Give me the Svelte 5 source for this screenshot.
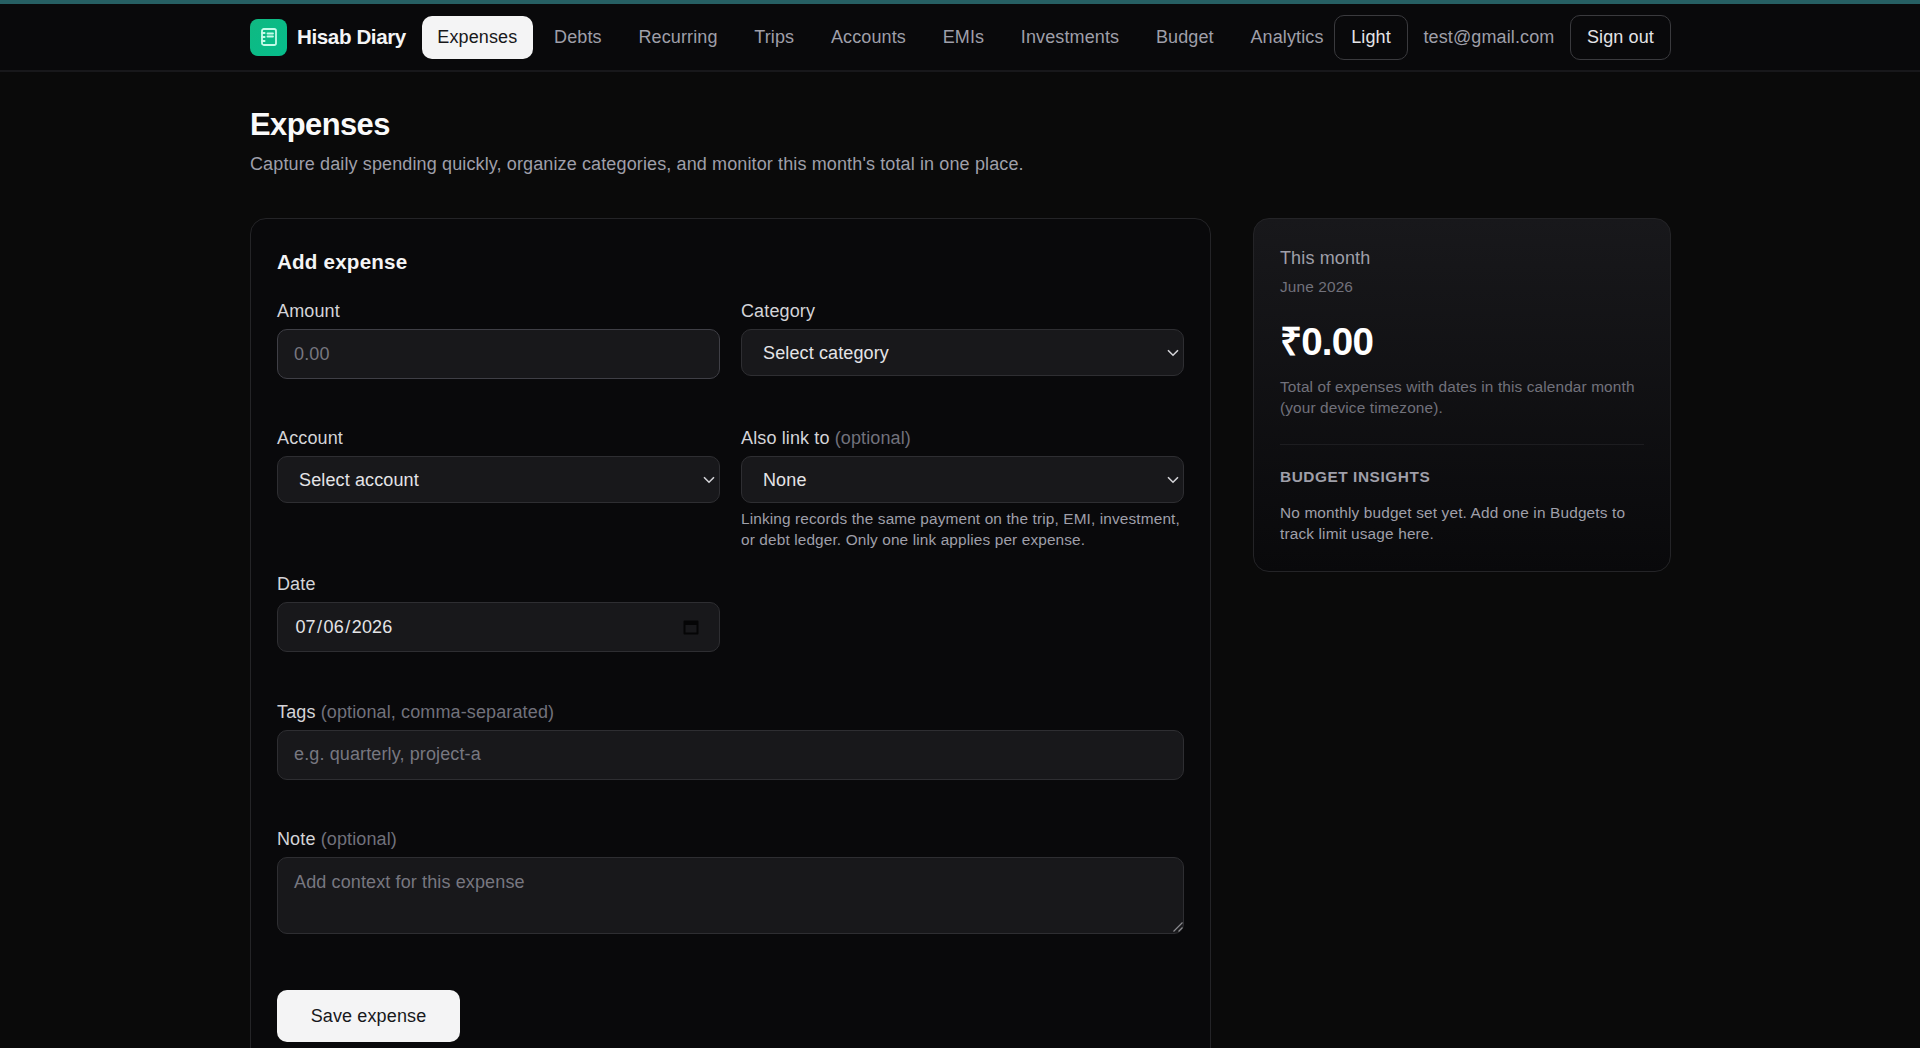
<script>
 const links = [
     'Expenses', 'Debts', 'Recurring', 'Trips', 'Accounts',
     'EMIs', 'Investments', 'Budget', 'Analytics'
 ]
 let current = $state('Expenses')
 let amount = $state('')
 let tags = $state('')
 let note = $state('')
</script>

{#snippet chevron()}
<svg class="chevron" viewBox="0 0 12 8" aria-hidden="true">
    <path d="M1 1.2 L6 6.2 L11 1.2" />
</svg>
{/snippet}

<div class="page">
    <div class="strip"></div>
    <header>
        <div class="bar">
            <a class="brand" href="#home">
                <span class="logo">
                    <svg viewBox="0 0 18 18" aria-hidden="true">
                        <rect x="2" y="1" width="14" height="16" rx="1.8" />
                        <path d="M2 5h2.6M2 9h2.6M2 13h2.6M7.5 5.5h5.5M7.5 8.5h5.5" />
                    </svg>
                </span>
                <span class="name">Hisab Diary</span>
            </a>
            <nav>
                {#each links as link}
                <a href="#{link}" class:active={link === current} onclick={() => current = link}>{link}</a>
                {/each}
            </nav>
            <div class="user">
                <button>Light</button>
                <span>test@gmail.com</span>
                <button>Sign out</button>
            </div>
        </div>
    </header>

    <main>
        <h1>Expenses</h1>
        <p class="lead">Capture daily spending quickly, organize categories, and monitor this month's total in one place.</p>

        <div class="columns">
            <form class="card" onsubmit={(e) => e.preventDefault()}>
                <h2>Add expense</h2>
                <div class="fields">
                    <div class="field">
                        <label for="amount">Amount</label>
                        <input id="amount" class="control strong" placeholder="0.00" bind:value={amount}>
                        <div class="message"></div>
                    </div>
                    <div class="field">
                        <label for="category">Category</label>
                        <div class="select">
                            <select id="category" class="control"><option>Select category</option></select>
                            {@render chevron()}
                        </div>
                        <div class="message"></div>
                    </div>
                    <div class="field">
                        <label for="account">Account</label>
                        <div class="select">
                            <select id="account" class="control"><option>Select account</option></select>
                            {@render chevron()}
                        </div>
                        <div class="message"></div>
                    </div>
                    <div class="field">
                        <label for="link">Also link to <em>(optional)</em></label>
                        <div class="select">
                            <select id="link" class="control"><option>None</option></select>
                            {@render chevron()}
                        </div>
                        <div class="message">Linking records the same payment on the trip, EMI, investment,<br>or debt ledger. Only one link applies per expense.</div>
                    </div>
                    <div class="field half">
                        <span class="label">Date</span>
                        <div class="control date">
                            <span>07</span>/<span>06</span>/<span>2026</span>
                            <svg viewBox="0 0 16 16" aria-hidden="true">
                                <path fill-rule="evenodd" d="M1.5 1.5h13a1 1 0 0 1 1 1v12a1 1 0 0 1-1 1h-13a1 1 0 0 1-1-1v-12a1 1 0 0 1 1-1zM2.5 6v7.5h11V6z" />
                            </svg>
                        </div>
                        <div class="message"></div>
                    </div>
                    <div class="field wide">
                        <label for="tags">Tags <em>(optional, comma-separated)</em></label>
                        <input id="tags" class="control" placeholder="e.g. quarterly, project-a" bind:value={tags}>
                        <div class="message"></div>
                    </div>
                    <div class="field wide">
                        <label for="note">Note <em>(optional)</em></label>
                        <div class="area">
                            <textarea id="note" class="control" placeholder="Add context for this expense" bind:value={note}></textarea>
                            <svg class="grip" viewBox="0 0 10 10" aria-hidden="true">
                                <path d="M0.5 9.5 L9.5 0.5 M5.5 9.5 L9.5 5.5" />
                            </svg>
                        </div>
                        <div class="message"></div>
                    </div>
                </div>
                <button class="save">Save expense</button>
            </form>

            <aside class="card">
                <p class="title">This month</p>
                <p class="small month">June 2026</p>
                <p class="total">₹0.00</p>
                <p class="small">Total of expenses with dates in this calendar month<br>(your device timezone).</p>
                <div class="insights">
                    <h3>Budget insights</h3>
                    <p>No monthly budget set yet. Add one in Budgets to<br>track limit usage here.</p>
                </div>
            </aside>
        </div>
    </main>
</div>

<style>
 :global(body) {
     margin: 0;
     background: #0a0a0a;
 }

 .page, .page * {
     box-sizing: border-box;
 }

 .page {
     height: 1048px;
     overflow: hidden;
     background: #0a0a0a;
     color: #f4f4f5;
     font-family: "Liberation Sans", Arial, sans-serif;
     font-size: 18px;
     line-height: 26px;
     letter-spacing: 0.125px;
 }

 h1, h2, h3, p {
     margin: 0;
 }

 a {
     color: inherit;
     text-decoration: none;
 }

 button, input, select, textarea {
     font: inherit;
     color: inherit;
     letter-spacing: inherit;
 }

 .strip {
     height: 4px;
     background: #265f63;
 }

 header {
     height: 68px;
     background: #09090b;
     border-bottom: 2px solid #18181b;
 }

 .bar, main {
     width: 1421px;
     margin: 0 auto 0 250px;
 }

 .bar {
     height: 66px;
     display: flex;
     align-items: center;
 }

 .brand {
     display: flex;
     align-items: center;
     gap: 10px;
     width: 171.5px;
     flex: none;
 }

 .logo {
     width: 37px;
     height: 37px;
     display: flex;
     align-items: center;
     justify-content: center;
     border-radius: 8px;
     background: linear-gradient(135deg, #10b981, #06bd8c);
 }

 .logo svg {
     width: 18px;
     height: 18px;
     fill: none;
     stroke: #c4fbe8;
     stroke-width: 1.8;
     stroke-linecap: round;
 }

 .name {
     font-size: 20.6px;
     font-weight: bold;
     letter-spacing: -0.4px;
     white-space: nowrap;
 }

 nav {
     display: flex;
     gap: 5.1px;
     flex: 1;
     min-width: 0;
 }

 nav a {
     padding: 8.5px 15.8px;
     border-radius: 10px;
     color: #9f9fa9;
 }

 nav a.active {
     background: #f4f4f5;
     color: #18181b;
 }

 .user {
     display: flex;
     align-items: center;
     gap: 15.5px;
     color: #9f9fa9;
     flex: none;
 }

 .user button {
     height: 45px;
     padding: 0 16px;
     background: none;
     border: 1.3px solid #3a3a3e;
     border-radius: 10px;
     color: #e4e4e7;
 }

 main {
     padding-top: 32px;
 }

 h1 {
     font-size: 30.9px;
     line-height: 41px;
     letter-spacing: -0.55px;
     color: #fafafa;
 }

 .lead {
     margin-top: 6px;
     color: #9f9fa9;
 }

 .columns {
     display: flex;
     justify-content: space-between;
     align-items: flex-start;
     margin-top: 41px;
 }

 .card {
     border: 1.3px solid #242427;
     border-radius: 16px;
     padding: 26px;
 }

 form {
     width: 961px;
     height: 870px;
     background: #09090b;
 }

 h2 {
     font-size: 20.6px;
     line-height: 33px;
     margin-bottom: 20px;
     letter-spacing: 0.2px;
 }

 .fields {
     display: grid;
     grid-template-columns: 443px 443px;
     justify-content: space-between;
     row-gap: 21px;
 }

 .half {
     grid-column: 1;
 }

 .wide {
     grid-column: 1 / 3;
 }

 label, .label {
     display: block;
     margin-bottom: 5px;
     color: #d4d4d8;
 }

 em {
     font-style: normal;
     color: #71717b;
 }

 .control {
     display: block;
     width: 100%;
     height: 50px;
     padding: 0 16px;
     background: #18181b;
     border: 1.3px solid #2e2e32;
     border-radius: 10px;
     color: #e4e4e7;
     outline: none;
 }

 .strong {
     border-color: #3f3f46;
 }

 .control::placeholder {
     color: #777780;
     opacity: 1;
 }

 .select, .area {
     position: relative;
 }

 select.control {
     height: 47px;
     padding: 0 21px;
     appearance: none;
 }

 .chevron {
     position: absolute;
     right: 5px;
     top: 19.5px;
     width: 12px;
     height: 8px;
     fill: none;
     stroke: #d4d4d8;
     stroke-width: 1.6;
 }

 .message {
     min-height: 20.2px;
     margin-top: 5.3px;
     font-size: 15.4px;
     line-height: 20.8px;
     color: #9f9fa9;
     white-space: nowrap;
 }

 .date {
     display: flex;
     align-items: center;
 }

 .date span {
     padding: 0 1.4px;
 }

 .date svg {
     width: 16px;
     height: 16px;
     margin-left: auto;
     margin-right: 4px;
     fill: #050506;
 }

 textarea.control {
     height: 76.5px;
     padding: 11px 16px;
     resize: none;
 }

 .grip {
     position: absolute;
     right: 1px;
     bottom: 2px;
     width: 10px;
     height: 10px;
     stroke: #8a8a8e;
     stroke-width: 1.2;
 }

 .save {
     display: block;
     width: 183px;
     height: 52px;
     margin-top: 30.4px;
     padding: 0;
     border: 0;
     border-radius: 10px;
     background: #f4f4f5;
     color: #18181b;
 }

 aside {
     width: 418px;
     height: 354px;
     padding: 27px 27px;
     background: linear-gradient(#18181b, #09090b);
 }

 .title {
     color: #9f9fa9;
 }

 .small {
     font-size: 15.4px;
     line-height: 20.6px;
     color: #71717b;
     white-space: nowrap;
 }

 .month {
     margin-top: 6px;
 }

 .total {
     margin: 21px 0 12.5px;
     font-size: 38.6px;
     line-height: 46px;
     font-weight: bold;
     letter-spacing: -0.8px;
     color: #fff;
 }

 .insights {
     margin-top: 25.7px;
     padding-top: 22px;
     border-top: 1.3px solid #1d1d20;
     font-size: 15.4px;
     line-height: 20.6px;
     color: #9f9fa9;
     white-space: nowrap;
 }

 .insights p {
     letter-spacing: 0.15px;
 }

 h3 {
     margin-bottom: 15.5px;
     font-size: inherit;
     letter-spacing: 0.55px;
     text-transform: uppercase;
 }
</style>
